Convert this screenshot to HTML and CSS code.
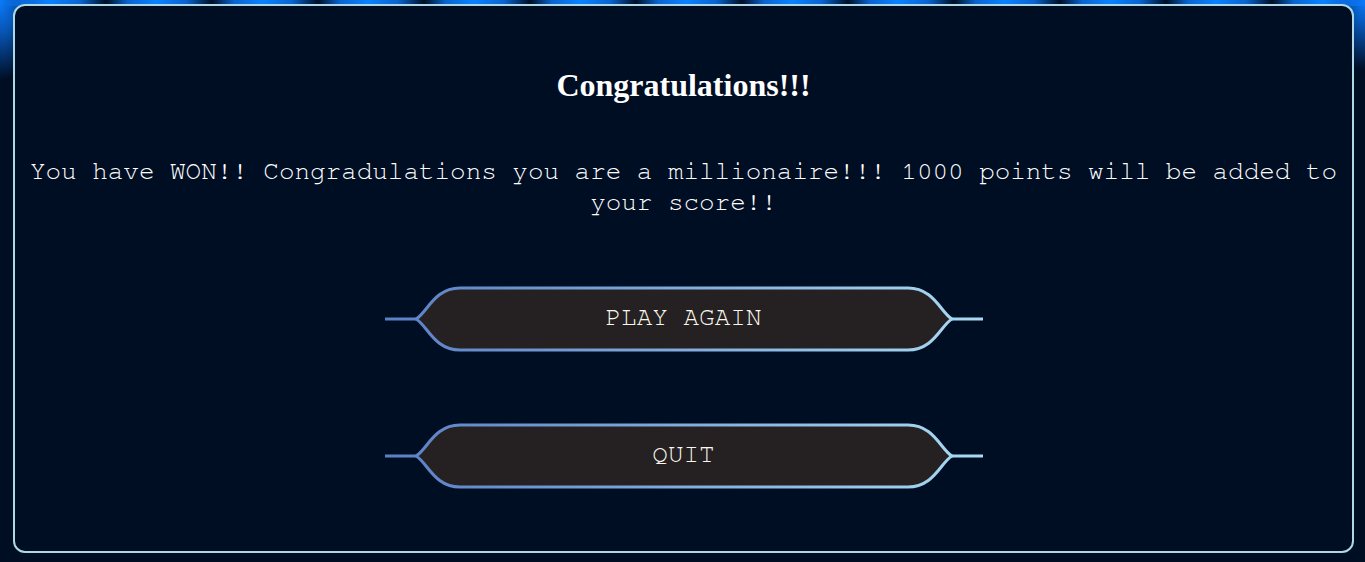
FILE: index.html
```html
<!DOCTYPE html>
<html lang="en">
<head>
<meta charset="utf-8">
<title>Congratulations</title>
<link rel="stylesheet" href="styles.css">
</head>
<body>
<main class="panel">
  <h1 class="title">Congratulations!!!</h1>
  <p class="message">You have WON!! Congradulations you are a millionaire!!! 1000 points will be added to your score!!</p>
  <div class="actions">
    <button class="option" type="button">
      <svg class="option-shape" width="598" height="66" viewBox="0 0 598 66" aria-hidden="true">
        <defs>
          <linearGradient id="edge1" gradientUnits="userSpaceOnUse" x1="0" y1="0" x2="598" y2="0">
            <stop offset="0" stop-color="#5a7fc5"/>
            <stop offset="1" stop-color="#a9daf3"/>
          </linearGradient>
        </defs>
        <path d="M31 33 C42 27 49 2 75 2 H523 C549 2 556 27 567 33 C556 39 549 64 523 64 H75 C49 64 42 39 31 33 Z" fill="#252021" stroke="url(#edge1)" stroke-width="3"/>
        <path d="M0 33 H31 M567 33 H598" fill="none" stroke="url(#edge1)" stroke-width="3"/>
      </svg>
      <span class="option-label">PLAY AGAIN</span>
    </button>
    <button class="option" type="button">
      <svg class="option-shape" width="598" height="66" viewBox="0 0 598 66" aria-hidden="true">
        <defs>
          <linearGradient id="edge2" gradientUnits="userSpaceOnUse" x1="0" y1="0" x2="598" y2="0">
            <stop offset="0" stop-color="#5a7fc5"/>
            <stop offset="1" stop-color="#a9daf3"/>
          </linearGradient>
        </defs>
        <path d="M31 33 C42 27 49 2 75 2 H523 C549 2 556 27 567 33 C556 39 549 64 523 64 H75 C49 64 42 39 31 33 Z" fill="#252021" stroke="url(#edge2)" stroke-width="3"/>
        <path d="M0 33 H31 M567 33 H598" fill="none" stroke="url(#edge2)" stroke-width="3"/>
      </svg>
      <span class="option-label">QUIT</span>
    </button>
  </div>
</main>
</body>
</html>
```

FILE: styles.css
```css
html, body {
  height: 100%;
}

body {
  margin: 0;
  overflow: hidden;
  background:
    radial-gradient(40px 80px at 0 0, #0a7cff 0%, rgba(10, 110, 230, 0.75) 40%, rgba(0, 14, 36, 0) 100%),
    radial-gradient(40px 70px at 100% 0, #0a7cff 0%, rgba(10, 110, 230, 0.7) 40%, rgba(0, 14, 36, 0) 100%),
    repeating-linear-gradient(90deg, #000e24 0px, #0a64d0 22px, #0a82ff 50px, #0a64d0 80px, #000e24 106px) top left / 100% 6px no-repeat,
    #000e24;
  font-family: "Liberation Serif", "Times New Roman", serif;
  box-sizing: border-box;
  padding: 4px 11px 9px 13px;
}

.panel {
  height: 549px;
  box-sizing: border-box;
  border: 2px solid #add8e6;
  border-radius: 12px;
  background: #000e24;
  display: flex;
  flex-direction: column;
  align-items: center;
}

.title {
  margin: 61px 0 0;
  font-family: "Liberation Serif", "Times New Roman", serif;
  font-size: 32px;
  font-weight: bold;
  line-height: 36px;
  color: #ffffff;
}

.message {
  margin: 53px 0 0;
  padding: 0 12px;
  font-family: "Nimbus Mono PS", "FreeMono", "Liberation Mono", "Courier New", monospace;
  font-size: 26px;
  line-height: 31px;
  letter-spacing: -0.04px;
  color: #ffffff;
  text-align: center;
}

.actions {
  margin-top: 68px;
  display: flex;
  flex-direction: column;
  align-items: center;
  gap: 71px;
}

.option {
  display: grid;
  place-items: center;
  width: 598px;
  height: 66px;
  padding: 0;
  border: 0;
  background: none;
  cursor: pointer;
}

.option-shape,
.option-label {
  grid-area: 1 / 1;
}

.option-shape {
  display: block;
}

.option-label {
  font-family: "Nimbus Mono PS", "FreeMono", "Liberation Mono", "Courier New", monospace;
  font-size: 26px;
  line-height: 30px;
  padding-bottom: 4px;
  color: #fbf7ee;
  position: relative;
}
```
